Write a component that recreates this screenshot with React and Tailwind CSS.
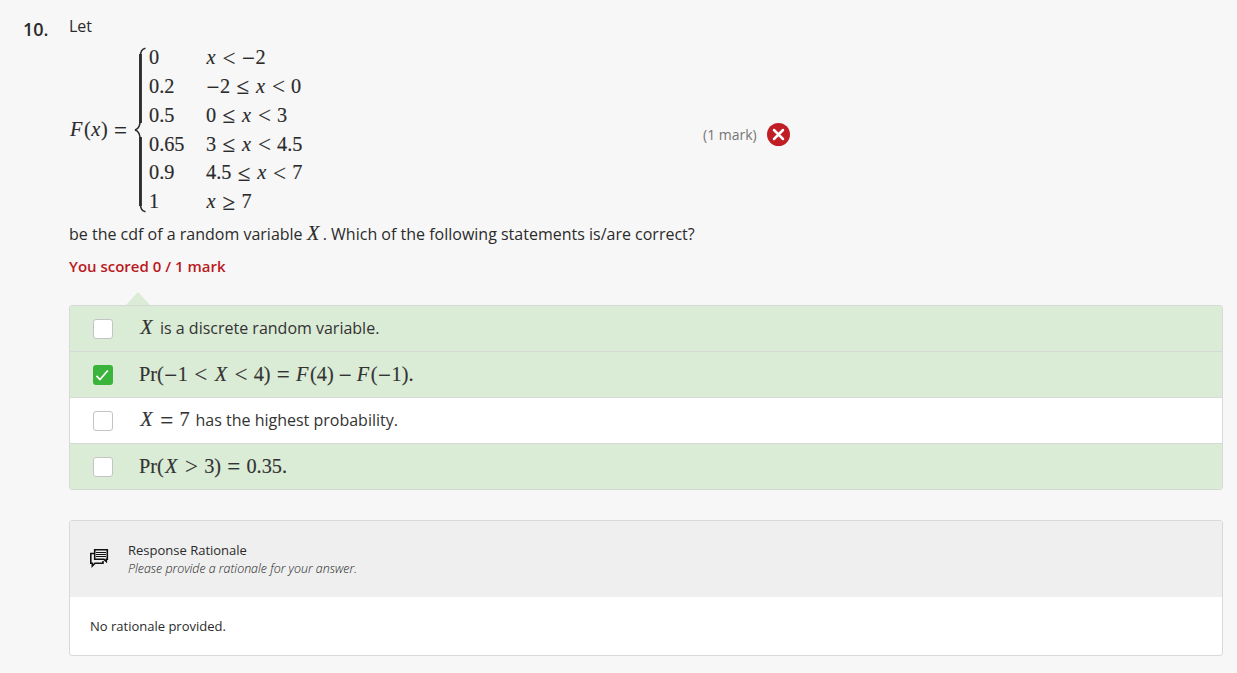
import React from "react";

const SERIF = "font-['Liberation_Serif','Times_New_Roman',serif] [-webkit-text-stroke:0.15px]";

// Splits a formula into upright text, italic variables, relations and signs.
function Formula({ children, className = "" }) {
  const tokens = children.match(/[A-Z]?r|[xFX]|[<>≤≥=]|\s−\s|−|[()]|[0-9.]+/g);
  return (
    <span className={`${SERIF} inline-flex items-baseline whitespace-pre text-[20.3px] leading-[24px] ${className}`}>
      {tokens.map((t, i) => {
        if (t === "x") return <i key={i} className="w-[10.2px] text-center">x</i>;
        if (t === "X") return <i key={i} className="w-[15px] text-center">X</i>;
        if (t === "F") return <i key={i} className="w-[14px]">F</i>;
        if (/^[<>≤≥=]$/.test(t))
          return <span key={i} className="relative top-[1.5px] mx-[5.7px] flex w-[14px] justify-center text-[23px]">{t}</span>;
        if (t === " − ") return <span key={i} className="relative top-[2px] mx-[4.6px] flex w-[14px] justify-center text-[23px]">−</span>;
        if (t === "−") return <span key={i} className="relative top-[2px] flex w-[14px] justify-center text-[23px]">−</span>;
        return <span key={i}>{t}</span>;
      })}
    </span>
  );
}

const CASES = [
  ["0", "x < −2"],
  ["0.2", "−2 ≤ x < 0"],
  ["0.5", "0 ≤ x < 3"],
  ["0.65", "3 ≤ x < 4.5"],
  ["0.9", "4.5 ≤ x < 7"],
  ["1", "x ≥ 7"],
];

function Brace() {
  return (
    <svg className="h-[166px] w-[13px] shrink-0" viewBox="0 0 13 166" fill="none">
      <path d="M11.500 1.200C7.500 1.800 6.300 4.500 6.300 10V72C6.300 79 5 82 1 83C5 84 6.300 87 6.300 94V156C6.300 161.500 7.500 164.200 11.500 164.800" stroke="#2b2b2b" strokeWidth="1.500" />
      <path d="M6.500 7V76M6.500 90V159" stroke="#2b2b2b" strokeWidth="2.800" />
    </svg>
  );
}

function Box({ checked }) {
  return checked ? (
    <span className="flex size-5 shrink-0 items-center justify-center rounded-[3px] bg-[#3bb43b]">
      <svg className="size-5" viewBox="0 0 20 20" fill="none" stroke="#fff" strokeWidth="1.7">
        <path d="M3.500 10.800 7 14.500 14.800 5.500" />
      </svg>
    </span>
  ) : (
    <span className="size-5 shrink-0 rounded-[3px] border border-[#c4c4c4] bg-white" />
  );
}

function Option({ checked, correct, first, children }) {
  return (
    <li className={`flex items-center pl-[23px] ${correct ? "bg-[#daebd6]" : "bg-white"} ${first ? "h-[45px]" : "h-[46px] border-t border-[#d6d9d6]"}`}>
      <Box checked={checked} />
      <div className="mb-[2px] ml-[26px] flex items-baseline text-[16px] leading-[24px] text-[#333]">{children}</div>
    </li>
  );
}

export default function App() {
  return (
    <main className="flex h-[673px] w-[1237px] bg-[#f7f7f7] pt-[14px] font-['Open_Sans',sans-serif] text-[#2b2b2b]">
      <div className="w-[69px] shrink-0 pt-[3px] pl-[23px] text-[18px] leading-[25px] font-semibold">10.</div>
      <div className="w-[1154px]">
        <div className="flex h-[240px] items-center">
          <div className="flex h-[240px] w-[634px] shrink-0 flex-col text-[16px]">
            <p className="h-[33px] leading-[24px]">Let</p>
            <div className="flex h-[166px] items-center">
              <Formula className="-mt-[2px] ml-[1px] w-[64px]">F(x) =</Formula>
              <Brace />
              <div className="mt-[3px] ml-[2px] grid grid-cols-[57px_auto]">
                {CASES.map(([value, range]) => (
                  <React.Fragment key={range}>
                    <Formula className="h-[28.800px]">{value}</Formula>
                    <Formula className="h-[28.800px]">{range}</Formula>
                  </React.Fragment>
                ))}
              </div>
            </div>
            <p className="mt-[8px] flex items-baseline leading-[24px] whitespace-pre">
              <span>be the cdf of a random variable </span>
              <Formula className="-ml-[1px]">X</Formula>
              <span className="ml-[2px]">. Which of the following statements is/are correct?</span>
            </p>
          </div>
          <span className="text-[14px] text-[#757575]">(1 mark)</span>
          <svg className="ml-[10px] size-[23px]" viewBox="0 0 23 23">
            <circle cx="11.500" cy="11.500" r="11.500" fill="#c01d25" />
            <path d="m7 7 9 9m0-9-9 9" stroke="#fff" strokeWidth="2.500" strokeLinecap="round" />
          </svg>
        </div>
        <p className="mt-[1px] mb-[15px] text-[15px] leading-[22px] font-semibold text-[#ba1922]">You scored 0 / 1 mark</p>

        <section>
          <svg className="ml-[57px] block h-[13px] w-[24px]" viewBox="0 0 24 13">
            <path d="M0 13 12 0 24 13Z" fill="#daebd6" />
          </svg>
          <ul className="h-[185px] overflow-hidden rounded-[3px] border border-[#d6d9d6]">
            <Option correct first>
              <Formula>X</Formula>
              <span className="ml-[6px]">is a discrete random variable.</span>
            </Option>
            <Option correct checked>
              <Formula>Pr(−1 &lt; X &lt; 4) = F(4) − F(−1).</Formula>
            </Option>
            <Option>
              <Formula>X = 7</Formula>
              <span className="ml-[6px]">has the highest probability.</span>
            </Option>
            <Option correct>
              <Formula>{"Pr(X > 3) = 0.35."}</Formula>
            </Option>
          </ul>
        </section>

        <section className="mt-[30px] h-[136px] overflow-hidden rounded-[3px] border border-[#d9d9d9] bg-white text-[13px]">
          <header className="flex h-[76px] items-center bg-[#efefef] pl-[20px]">
            <svg className="mb-[2px] size-[20px]" viewBox="0 0 20 20" fill="none" stroke="#111" strokeWidth="1.600">
              <path d="M4.700 1.700H17.300V11.300H16.300V13.500L14 11.300H4.700Z" />
              <path d="M6 4.500H16M6 6.500H16M6 8.500H16" strokeWidth="1" />
              <path d="M4 5.500H.8V15.300H2.300V18L5 15.300H13V13" />
            </svg>
            <div className="ml-[18px] leading-[18px]">
              <h2>Response Rationale</h2>
              <p className="pt-px text-[12.400px] leading-[17px] font-light text-[#1c1c1c] italic">Please provide a rationale for your answer.</p>
            </div>
          </header>
          <p className="pt-[19px] pl-[20px] leading-[20px]">No rationale provided.</p>
        </section>
      </div>
    </main>
  );
}
